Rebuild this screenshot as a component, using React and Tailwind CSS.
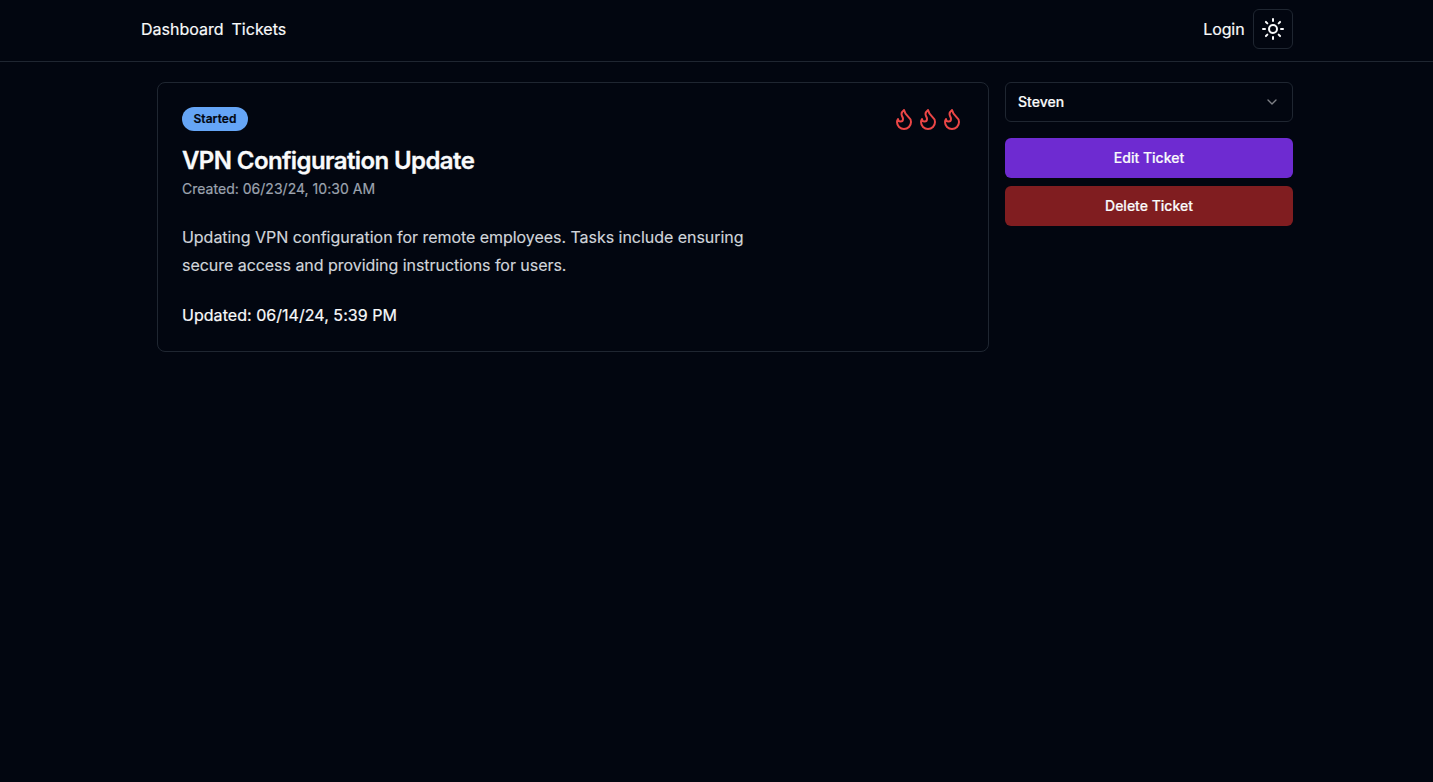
import React from "react";
import { Flame, Sun, ChevronDown } from "lucide-react";

function Header() {
  return (
    <nav className="flex h-[62px] justify-center border-b border-[#1f2631]">
      <div className="flex h-[58px] w-[1152px] items-center justify-between">
        <div className="flex items-center gap-2 pl-[0.5px]">
          <a href="#dashboard">Dashboard</a>
          <a href="#tickets">Tickets</a>
        </div>
        <div className="flex items-center gap-2">
          <a href="#login" className="tracking-[-0.1px]">Login</a>
          <button aria-label="Toggle theme" className="flex size-10 items-center justify-center rounded-md border border-[#1f2631]">
            <Sun size={24} />
          </button>
        </div>
      </div>
    </nav>
  );
}

function TicketCard() {
  return (
    <article className="h-[270px] w-[832px] rounded-lg border border-[#1f2631] p-6">
      <div className="flex h-6 items-center justify-between">
        <span className="flex h-6 w-[66px] items-center justify-center rounded-full bg-[#65a5f6] text-xs font-semibold tracking-[0.08px] text-[#020610]">Started</span>
        <div className="flex text-[#ec4646]">
          <Flame size={24} />
          <Flame size={24} />
          <Flame size={24} />
        </div>
      </div>
      <h1 className="mt-[18px] text-2xl leading-6 font-semibold tracking-tight [-webkit-text-stroke:0.3px]">VPN Configuration Update</h1>
      <p className="mt-1.5 text-sm tracking-[0.02px] text-[#9ca3af]">Created: 06/23/24, 10:30 AM</p>
      <p className="mt-6 w-[575px] leading-7 tracking-[-0.04px] text-[#d1d5db] [-webkit-text-stroke:0.15px]">
        Updating VPN configuration for remote employees. Tasks include ensuring secure access and providing instructions for users.
      </p>
      <p className="mt-6 tracking-[0.04px]">Updated: 06/14/24, 5:39 PM</p>
    </article>
  );
}

function Actions() {
  return (
    <aside className="flex w-72 flex-col text-sm font-medium">
      <button className="flex h-10 items-center justify-between rounded-md border border-[#1f2631] px-3">
        Steven
        <ChevronDown size={16} className="opacity-50" />
      </button>
      <button className="mt-4 h-10 rounded-md bg-[#6e2bd1]">Edit Ticket</button>
      <button className="mt-2 h-10 rounded-md bg-[#801d20]">Delete Ticket</button>
    </aside>
  );
}

export default function App() {
  return (
    <div className="min-h-screen bg-[#020610] font-['Inter',sans-serif] text-gray-50 [-webkit-text-stroke:0.2px]">
      <Header />
      <main className="flex gap-4 pt-5 pl-[157px]">
        <TicketCard />
        <Actions />
      </main>
    </div>
  );
}
